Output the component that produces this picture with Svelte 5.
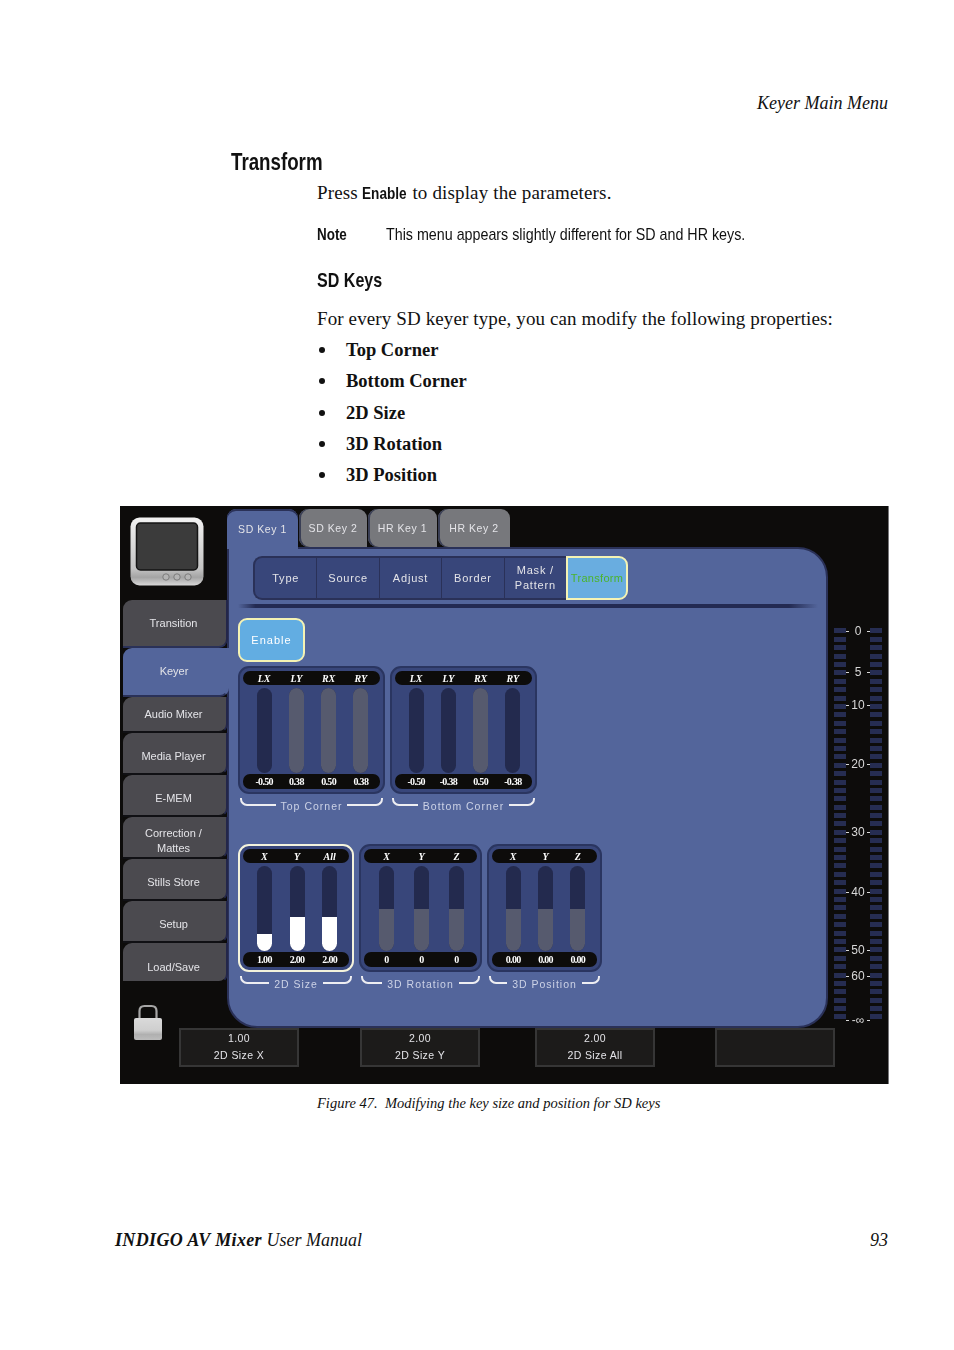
<script>
  const sideItems = [
    { label: 'Transition', tall: true },
    { label: 'Keyer', tall: true, active: true },
    { label: 'Audio Mixer' },
    { label: 'Media Player' },
    { label: 'E-MEM' },
    { label: 'Correction /\nMattes' },
    { label: 'Stills Store' },
    { label: 'Setup' },
    { label: 'Load/Save' }
  ];

  const tabs = [
    { label: 'SD Key 1', width: 71 },
    { label: 'SD Key 2', width: 68 },
    { label: 'HR Key 1', width: 69 },
    { label: 'HR Key 2', width: 72 }
  ];
  const subTabs = ['Type', 'Source', 'Adjust', 'Border', 'Mask /\nPattern'];

  const grey = '#565a6e';
  const white = '#ffffff';

  const topGroups = [
    {
      name: 'Top Corner', width: 147,
      faders: [
        { head: 'LX', value: '-0.50', fill: 0, color: grey },
        { head: 'LY', value: '0.38', fill: 100, color: grey },
        { head: 'RX', value: '0.50', fill: 100, color: grey },
        { head: 'RY', value: '0.38', fill: 100, color: grey }
      ]
    },
    {
      name: 'Bottom Corner', width: 147,
      faders: [
        { head: 'LX', value: '-0.50', fill: 0, color: grey },
        { head: 'LY', value: '-0.38', fill: 0, color: grey },
        { head: 'RX', value: '0.50', fill: 100, color: grey },
        { head: 'RY', value: '-0.38', fill: 0, color: grey }
      ]
    }
  ];

  const bottomGroups = [
    {
      name: '2D Size', width: 116, selected: true,
      faders: [
        { head: 'X', value: '1.00', fill: 20, color: white },
        { head: 'Y', value: '2.00', fill: 40, color: white },
        { head: 'All', value: '2.00', fill: 40, color: white }
      ]
    },
    {
      name: '3D Rotation', width: 123,
      faders: [
        { head: 'X', value: '0', fill: 50, color: grey },
        { head: 'Y', value: '0', fill: 50, color: grey },
        { head: 'Z', value: '0', fill: 50, color: grey }
      ]
    },
    {
      name: '3D Position', width: 115,
      faders: [
        { head: 'X', value: '0.00', fill: 50, color: grey },
        { head: 'Y', value: '0.00', fill: 50, color: grey },
        { head: 'Z', value: '0.00', fill: 50, color: grey }
      ]
    }
  ];

  const softKeys = [
    { value: '1.00', name: '2D Size X', gap: 0 },
    { value: '2.00', name: '2D Size Y', gap: 61 },
    { value: '2.00', name: '2D Size All', gap: 55 },
    { value: '', name: '', gap: 60 }
  ];

  // meter scale, y offset from first segment
  const scale = [
    { label: '0', y: 0 },
    { label: '5', y: 41 },
    { label: '10', y: 74 },
    { label: '20', y: 133 },
    { label: '30', y: 201 },
    { label: '40', y: 261 },
    { label: '50', y: 319 },
    { label: '60', y: 345 },
    { label: '-∞', y: 389 }
  ];
  const segments = Array.from({ length: 47 }, (_, i) => i);
  const bullets = ['Top Corner', 'Bottom Corner', '2D Size', '3D Rotation', '3D Position'];
</script>

{#snippet group(g)}
  <div class="group" style="width: {g.width}px">
    <div class="box" class:selected={g.selected}>
      <div class="pill head">
        {#each g.faders as f}<span>{f.head}</span>{/each}
      </div>
      <div class="tracks">
        {#each g.faders as f}
          <div class="track">
            <div class="fill" class:full={f.fill === 100} style="height: {f.fill}%; background: {f.color}"></div>
          </div>
        {/each}
      </div>
      <div class="pill foot">
        {#each g.faders as f}<span>{f.value}</span>{/each}
      </div>
    </div>
    <div class="brace">
      <i class="left"></i>
      <span>{g.name}</span>
      <i class="right"></i>
    </div>
  </div>
{/snippet}

<div class="page">
  <div class="running-head">Keyer Main Menu</div>

  <h1><span class="narrow">Transform</span></h1>
  <div class="content">
    <p class="intro">Press <b class="narrow enable-word">Enable</b> to display the parameters.</p>
    <div class="note"><b class="narrow">Note</b><span class="narrow note-text">This menu appears slightly different for SD and HR keys.</span></div>
    <h2><span class="narrow">SD Keys</span></h2>
    <p class="lead">For every SD keyer type, you can modify the following properties:</p>
    <ul>
      {#each bullets as item}
        <li>{item}</li>
      {/each}
    </ul>
  </div>

  <div class="shot">
    <aside class="sidebar">
      <svg class="monitor" width="74" height="70" viewBox="0 0 74 70">
        <defs>
          <linearGradient id="silver" x1="0" y1="0" x2="0" y2="1">
            <stop offset="0" stop-color="#f2f2f2" />
            <stop offset="0.75" stop-color="#c4c4c4" />
            <stop offset="0.88" stop-color="#a4a4a4" />
            <stop offset="1" stop-color="#d8d8d8" />
          </linearGradient>
        </defs>
        <rect x="0.5" y="0.5" width="73" height="68" rx="9" fill="url(#silver)" />
        <rect x="6.5" y="6" width="61" height="47" rx="4" fill="#3b3b3b" stroke="#151515" stroke-width="1.5" />
        <circle cx="36" cy="60" r="3.2" fill="#b4b4b4" stroke="#7c7c7c" />
        <circle cx="47" cy="60" r="3.2" fill="#b4b4b4" stroke="#7c7c7c" />
        <circle cx="58" cy="60" r="3.2" fill="#b4b4b4" stroke="#7c7c7c" />
      </svg>

      <nav class="side-list">
        {#each sideItems as item}
          <div class="side-btn" class:tall={item.tall} class:active={item.active}>{item.label}</div>
        {/each}
      </nav>

      <svg class="lock" width="30" height="36" viewBox="0 0 30 36">
        <defs>
          <linearGradient id="lockbody" x1="0" y1="0" x2="0" y2="1">
            <stop offset="0" stop-color="#dadada" />
            <stop offset="0.55" stop-color="#cfcfcf" />
            <stop offset="0.75" stop-color="#b0b0b0" />
            <stop offset="1" stop-color="#bcbcbc" />
          </linearGradient>
        </defs>
        <path d="M6.5 15 V7 Q6.5 2 11.5 2 H18.5 Q23.5 2 23.5 7 V15" fill="none" stroke="#a6a6a6" stroke-width="2.2" />
        <rect x="1" y="14" width="28" height="22" rx="2" fill="url(#lockbody)" />
      </svg>
    </aside>

    <main class="main">
      <div class="tabs">
        {#each tabs as tab, i}
          <div class="tab" class:current={i === 0} style="width: {tab.width}px">{tab.label}</div>
        {/each}
      </div>
      <section class="panel">
        <div class="subtabs">
          {#each subTabs as tab}
            <div class="subtab">{tab}</div>
          {/each}
          <div class="subtab lit">Transform</div>
        </div>
        <div class="divider"></div>
        <button class="enable">Enable</button>

        <div class="row first">
          {#each topGroups as g}
            {@render group(g)}
          {/each}
        </div>
        <div class="row second">
          {#each bottomGroups as g}
            {@render group(g)}
          {/each}
        </div>
      </section>
    </main>

    <div class="meter">
      <div class="bars">
        <div class="bar-col">
          {#each segments as s}<i></i>{/each}
        </div>
        <div class="bar-col">
          {#each segments as s}<i></i>{/each}
        </div>
      </div>
      {#each scale as mark}
        <div class="mark" style="top: {mark.y}px">
          <span class="tick"></span>
          <span>{mark.label}</span>
          <span class="tick"></span>
        </div>
      {/each}
    </div>

    <div class="softkeys">
      {#each softKeys as key}
        <div class="softkey" style="margin-left: {key.gap}px">
          <span>{key.value}</span>
          <span>{key.name}</span>
        </div>
      {/each}
    </div>
  </div>

  <p class="caption">Figure 47.&nbsp; Modifying the key size and position for SD keys</p>

  <footer>
    <span><b>INDIGO AV Mixer</b> User Manual</span>
    <span>93</span>
  </footer>
</div>

<style>
  :global(body) {
    margin: 0;
    background: #ffffff;
  }

  .page {
    position: relative;
    width: 954px;
    height: 1350px;
    overflow: hidden;
    box-sizing: border-box;
    padding-top: 92px;
    color: #111111;
    font-family: "Liberation Serif", serif;
    font-size: 19px;
  }

  .running-head {
    height: 22px;
    line-height: 22px;
    padding-right: 66px;
    text-align: right;
    font-style: italic;
    font-size: 18px;
  }

  /* no condensed sans installed, so squeeze Liberation Sans */
  .narrow {
    display: inline-block;
    transform-origin: left center;
    white-space: nowrap;
    font-family: "Liberation Sans", sans-serif;
  }

  h1 {
    margin: 35px 0 0 231px;
    font-size: 24px;
    line-height: 26px;
    font-weight: 700;
  }

  h1 .narrow {
    transform: scaleX(0.78);
  }

  .content {
    margin-left: 317px;
  }

  .intro {
    margin: 6px 0 0;
    line-height: 24px;
    letter-spacing: 0.15px;
  }

  .enable-word {
    font-size: 17px;
    transform: scaleX(0.8);
    margin-right: -10px;
    margin-left: -1px;
    letter-spacing: 0;
  }

  .note {
    display: flex;
    margin-top: 17px;
    height: 24px;
    line-height: 24px;
    font-size: 17px;
  }

  .note b {
    width: 69px;
    transform: scaleX(0.79);
  }

  .note-text {
    transform: scaleX(0.84);
  }

  h2 {
    margin: 21px 0 0;
    font-size: 21px;
    line-height: 24px;
  }

  h2 .narrow {
    transform: scaleX(0.765);
  }

  .lead {
    margin: 15px 0 0;
    line-height: 24px;
    letter-spacing: 0.12px;
  }

  ul {
    margin: 7px 0 0;
    padding: 0;
    list-style: none;
  }

  li {
    position: relative;
    padding-left: 29px;
    height: 31.3px;
    line-height: 24px;
    font-weight: 700;
    font-size: 18.5px;
  }

  li::before {
    content: "";
    position: absolute;
    left: 2px;
    top: 9px;
    width: 6px;
    height: 6px;
    border-radius: 50%;
    background: #111111;
  }

  /* embedded screenshot */
  .shot {
    display: grid;
    grid-template-columns: 107px 601px 61px;
    grid-template-rows: 522px 56px;
    margin: 12px 0 0 120px;
    width: 769px;
    height: 578px;
    background: #0d0c0b;
    box-shadow: inset -1px 0 0 #77777a;
    font-family: "Liberation Sans", sans-serif;
    color: #e4e4e8;
    font-size: 11px;
    filter: blur(0.4px);
  }

  .sidebar {
    display: flex;
    flex-direction: column;
    position: relative;
    z-index: 1;
  }

  .monitor {
    margin: 11px 0 0 10px;
    flex: none;
  }

  .side-list {
    display: flex;
    flex-direction: column;
    margin: 13px 0 0 3px;
    width: 105px;
  }

  .side-btn {
    display: flex;
    align-items: center;
    justify-content: center;
    box-sizing: border-box;
    height: 42px;
    padding: 7px 2px 0 0;
    text-align: center;
    white-space: pre-line;
    line-height: 15px;
    background: #4b4a4f;
    border-right: 2px solid #23264a;
    border-bottom: 2px solid #101014;
    border-radius: 9px 0 9px 0;
    font-size: 11px;
  }

  .side-btn.tall {
    height: 48px;
    padding-top: 0;
    border-bottom-color: #2a3158;
  }

  .side-btn.active {
    height: 49px;
    background: #53659b;
    border-right-color: #53659b;
    width: 106px;
  }

  .side-btn:nth-child(3) {
    height: 36px;
    padding-top: 0;
  }

  .side-btn:last-child {
    height: 40px;
    padding-top: 11px;
    border-bottom-color: #0d0c0b;
  }

  .lock {
    margin: 21px 0 0 13px;
    flex: none;
  }

  .main {
    display: flex;
    flex-direction: column;
    min-width: 0;
  }

  .tabs {
    display: flex;
    gap: 1px;
    height: 41px;
    padding-top: 3px;
    box-sizing: border-box;
  }

  .tab {
    display: flex;
    align-items: center;
    justify-content: center;
    height: 38px;
    background: #77787c;
    border-radius: 9px 9px 0 9px;
    box-shadow: inset 2px 0 0 #3a3f55;
    letter-spacing: 0.55px;
    font-size: 10.5px;
  }

  .tab.current {
    height: 40px;
    background: #53659b;
    border-radius: 9px 9px 0 0;
    box-shadow: inset 0 2px 0 #2a3158;
    position: relative;
    z-index: 1;
  }

  .panel {
    flex: 1;
    box-sizing: border-box;
    padding: 7px 8px 0 9px;
    background: #53659b;
    border: 2px solid #2a3158;
    border-radius: 0 30px 30px 30px;
  }

  .subtabs {
    display: flex;
    width: 375px;
    height: 44px;
    margin-left: 15px;
    box-sizing: border-box;
  }

  .subtab {
    display: flex;
    align-items: center;
    justify-content: center;
    flex: 1;
    background: #38467a;
    border: 2px solid #2a3158;
    border-left-width: 1px;
    border-right-width: 0;
    white-space: pre-line;
    text-align: center;
    line-height: 15px;
    letter-spacing: 0.8px;
    font-size: 11px;
  }

  .subtab:first-child {
    border-left-width: 2px;
    border-radius: 9px 0 0 9px;
  }

  .subtab.lit {
    flex: none;
    box-sizing: border-box;
    width: 62px;
    background: #69ade0;
    border: 2px solid #f5f3b4;
    border-radius: 0 9px 9px 0;
    color: #4cb42c;
    letter-spacing: 0.3px;
  }

  .divider {
    height: 4px;
    margin-top: 4px;
    background: linear-gradient(to right, #53659b, #232a52 3%, #232a52 95%, #53659b);
  }

  .enable {
    display: block;
    width: 67px;
    height: 44px;
    margin-top: 10px;
    padding: 0;
    background: #62ade2;
    border: 2px solid #f5f3b4;
    border-radius: 9px;
    color: #ffffff;
    font-family: inherit;
    font-size: 11px;
    letter-spacing: 1px;
  }

  .row {
    display: flex;
    gap: 5px;
  }

  .row.first {
    margin-top: 4px;
  }

  .row.second {
    margin-top: 34px;
  }

  .box {
    display: flex;
    flex-direction: column;
    box-sizing: border-box;
    height: 128px;
    padding: 3px;
    background: #38467a;
    border: 2px solid #2a3560;
    border-radius: 11px;
  }

  .box.selected {
    border-color: #f4f3dc;
  }

  .pill {
    display: flex;
    align-items: center;
    justify-content: space-around;
    height: 14px;
    flex: none;
    padding: 0 3px 0 5px;
    background: #0d0c0b;
    border-radius: 7px;
    color: #ffffff;
    font-family: "Liberation Serif", serif;
    font-weight: 700;
    font-size: 10px;
  }

  .pill span {
    flex: 1;
    text-align: center;
  }

  .pill.head {
    font-style: italic;
  }

  .pill.foot {
    height: 15px;
    letter-spacing: -0.7px;
  }

  .tracks {
    display: flex;
    flex: 1;
    padding: 3px 3px 1px 5px;
  }

  .track {
    flex: 1;
    display: flex;
    flex-direction: column;
    justify-content: flex-end;
    position: relative;
  }

  .track::before {
    content: "";
    position: absolute;
    top: 0;
    bottom: 0;
    left: 50%;
    width: 15px;
    margin-left: -7.5px;
    background: #232a4e;
    border-radius: 7.5px;
  }

  .fill {
    position: relative;
    width: 15px;
    margin: 0 auto;
    border-radius: 0 0 7.5px 7.5px;
  }

  .fill.full {
    border-radius: 7.5px;
  }

  .brace {
    display: flex;
    align-items: flex-end;
    gap: 5px;
    height: 16px;
    padding: 0 2px;
    color: #ccd2e6;
    font-size: 10.5px;
    letter-spacing: 1px;
    white-space: nowrap;
  }

  .brace span {
    position: relative;
    top: 2px;
  }

  .brace i {
    flex: 1;
    height: 6px;
    margin-bottom: 4px;
    border-bottom: 2px solid #eeeef2;
  }

  .brace .left {
    border-left: 2px solid #eeeef2;
    border-bottom-left-radius: 7px;
  }

  .brace .right {
    border-right: 2px solid #eeeef2;
    border-bottom-right-radius: 7px;
  }

  .meter {
    position: relative;
    margin: 122px 7px 0 6px;
    grid-row: 1 / 3;
    grid-column: 3;
  }

  .bars {
    display: flex;
    justify-content: space-between;
  }

  .bar-col {
    display: flex;
    flex-direction: column;
    gap: 3.4px;
    width: 12px;
  }

  .bar-col i {
    display: block;
    height: 5px;
    background: #262d52;
  }

  .mark {
    position: absolute;
    left: 12px;
    right: 12px;
    display: flex;
    align-items: center;
    justify-content: space-between;
    height: 6px;
    color: #d8d8d8;
    font-size: 12px;
  }

  .tick {
    width: 3px;
    height: 1px;
    background: #d8d8d8;
  }

  .softkeys {
    grid-row: 2;
    grid-column: 1 / 3;
    display: flex;
    align-items: flex-start;
    padding-left: 59px;
    z-index: 2;
  }

  .softkey {
    flex: none;
    display: flex;
    flex-direction: column;
    align-items: center;
    justify-content: center;
    gap: 3px;
    box-sizing: border-box;
    width: 120px;
    height: 39px;
    padding-bottom: 2px;
    background: #1c1b1a;
    border: 2px solid #363636;
    font-size: 10.5px;
    line-height: 14px;
    letter-spacing: 0.4px;
  }

  .caption {
    margin: 9px 0 0 317px;
    font-style: italic;
    font-size: 14.5px;
    line-height: 20px;
  }

  footer {
    position: absolute;
    left: 115px;
    right: 66px;
    top: 1229px;
    display: flex;
    justify-content: space-between;
    font-style: italic;
    font-size: 18px;
    line-height: 22px;
  }

  footer b {
    letter-spacing: 0.35px;
  }
</style>
